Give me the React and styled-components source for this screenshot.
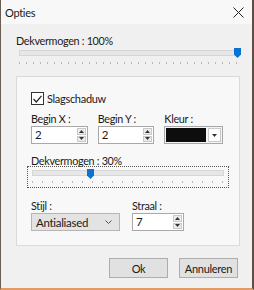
import React from 'react';
import styled, { createGlobalStyle } from 'styled-components';

const GlobalStyle = createGlobalStyle`
  html, body {
    margin: 0;
    padding: 0;
    background: #f0f0f0;
  }
  body {
    font-family: Lato, "Open Sans", sans-serif;
    font-size: 10.5px;
    letter-spacing: -0.3px;
    color: #1a1a1a;
  }
`;

const Window = styled.div`
  width: 254px;
  height: 290px;
  box-sizing: border-box;
  display: flex;
  flex-direction: column;
  background: #f0f0f0;
  border-left: 1px solid #6a5d52;
  border-right: 2px solid #5a5048;
  border-bottom: 2px solid #e39a63;
  overflow: hidden;
`;

const TitleBar = styled.div`
  height: 24px;
  display: flex;
  align-items: center;
  justify-content: space-between;
  padding: 0 6px 0 4px;
  background: #f8f8f8;
  font-size: 11px;
`;

const CloseButton = styled.span`
  display: flex;
  align-items: center;
  justify-content: center;
  width: 16px;
  height: 16px;
`;

const Body = styled.div`
  flex: 1;
  display: flex;
  flex-direction: column;
  padding: 10px 12px 0 15px;
`;

const Label = styled.div`
  font-size: 10.8px;
  line-height: 13px;
  margin-top: ${({ $top = 0 }) => $top}px;
  white-space: nowrap;
`;

const SliderBox = styled.div`
  position: relative;
  height: ${({ $height }) => $height}px;
  margin: ${({ $margin }) => $margin};
  box-sizing: border-box;
  border: 1px ${({ $focused }) => ($focused ? 'dotted #555' : 'solid transparent')};
  padding: 0 ${({ $pad }) => $pad}px;
`;

const Track = styled.div`
  margin-top: ${({ $top }) => $top}px;
  height: 4px;
  background: #e7e7e7;
  border: 1px solid #d6d6d6;
`;

const Ticks = styled.div`
  margin-top: ${({ $gap }) => $gap}px;
  height: 2px;
  background: repeating-linear-gradient(
    to right,
    #b8b8b8 0 1px,
    transparent 1px ${({ $step }) => $step}px
  );
`;

const Thumb = styled.svg`
  position: absolute;
  top: ${({ $top }) => $top}px;
`;

const Slider = ({ value, height, margin, focused, pad, trackTop, tickGap, step, thumbTop }) => (
  <SliderBox $height={height} $margin={margin} $focused={focused} $pad={pad}>
    <Track $top={trackTop} />
    <Ticks $gap={tickGap} $step={step} />
    <Thumb
      width="7"
      height="10"
      viewBox="0 0 7 10"
      $top={thumbTop}
      style={{ left: `calc(${pad}px + (100% - ${pad * 2}px) * ${value / 100} - 3px)` }}
    >
      <path d="M0 0 H7 V6.5 L3.5 10 L0 6.5 Z" fill="#0a72d1" />
    </Thumb>
  </SliderBox>
);

const Group = styled.div`
  height: 170px;
  box-sizing: border-box;
  border: 1px solid #dadada;
  background: #f8f8f8;
  padding: 15px 16px 0 14px;
  display: flex;
  flex-direction: column;
`;

const CheckRow = styled.label`
  display: flex;
  align-items: center;
  gap: 3px;
  height: 13px;
  font-size: 11px;
`;

const CheckBox = styled.span`
  width: 11px;
  height: 11px;
  border: 1px solid #333;
  background: #fff;
  display: flex;
  align-items: center;
  justify-content: center;
`;

const FieldRow = styled.div`
  display: flex;
  gap: ${({ $gap }) => $gap}px;
  margin-top: ${({ $top }) => $top}px;
`;

const Field = styled.div`
  display: flex;
  flex-direction: column;
  gap: 1px;
  width: ${({ $w }) => $w}px;
`;

const InputBox = styled.div`
  height: 18px;
  box-sizing: border-box;
  display: flex;
  align-items: stretch;
  background: #fff;
  border: 1px solid #a8a8a8;
`;

const InputText = styled.span`
  flex: 1;
  padding-left: 3px;
  font-size: 11.5px;
  line-height: 16px;
`;

const SpinCol = styled.div`
  width: 9px;
  display: flex;
  flex-direction: column;
  justify-content: center;
  gap: 1px;
  margin: 1px 1px 1px 0;
`;

const SpinBtn = styled.span`
  flex: 1;
  display: flex;
  align-items: center;
  justify-content: center;
  background: #ececec;
  border: 1px solid #c9c9c9;
`;

const Tri = ({ down }) => (
  <svg width="5" height="3" viewBox="0 0 5 3">
    <path d={down ? 'M0 0 H5 L2.5 3 Z' : 'M0 3 H5 L2.5 0 Z'} fill="#333" />
  </svg>
);

const Spinner = ({ value }) => (
  <InputBox>
    <InputText>{value}</InputText>
    <SpinCol>
      <SpinBtn><Tri /></SpinBtn>
      <SpinBtn><Tri down /></SpinBtn>
    </SpinCol>
  </InputBox>
);

const ColorPick = styled.div`
  height: 18px;
  box-sizing: border-box;
  display: flex;
  padding: 1px;
  gap: 2px;
  background: #f4f4f4;
  border: 1px solid #a8a8a8;
`;

const Swatch = styled.span`
  flex: 1;
  background: #0d0d0d;
`;

const ArrowBox = styled.span`
  width: 11px;
  display: flex;
  align-items: center;
  justify-content: center;
  background: #fff;
  border: 1px solid #c9c9c9;
`;

const Select = styled.div`
  height: 18px;
  box-sizing: border-box;
  display: flex;
  align-items: center;
  justify-content: space-between;
  padding: 0 7px 0 4px;
  background: #e3e3e3;
  border: 1px solid #b5b5b5;
  font-size: 11.5px;
`;

const Buttons = styled.div`
  display: flex;
  justify-content: flex-end;
  gap: 11px;
  margin-top: 12px;
  padding-right: 2px;
`;

const Button = styled.button`
  width: 59px;
  height: 20px;
  padding: 0;
  font-family: inherit;
  font-size: 11px;
  letter-spacing: inherit;
  color: #1a1a1a;
  background: #e1e1e1;
  border: 1px solid #adadad;
`;

export default function App() {
  return (
    <>
      <GlobalStyle />
      <Window>
        <TitleBar>
          <span>Opties</span>
          <CloseButton>
            <svg width="11" height="11" viewBox="0 0 11 11">
              <path d="M0.5 0.5 L10.5 10.5 M10.5 0.5 L0.5 10.5" stroke="#222" strokeWidth="1" />
            </svg>
          </CloseButton>
        </TitleBar>
        <Body>
          <Label>Dekvermogen : 100%</Label>
          <Slider
            value={100}
            height={29}
            margin="0"
            pad={2}
            trackTop={2}
            tickGap={6}
            step={7}
            thumbTop={0}
          />
          <Group>
            <CheckRow>
              <CheckBox>
                <svg width="9" height="8" viewBox="0 0 9 8">
                  <path d="M0.5 4 L3.3 7 L8.5 0.8" stroke="#222" strokeWidth="1.2" fill="none" />
                </svg>
              </CheckBox>
              Slagschaduw
            </CheckRow>
            <FieldRow $gap={10} $top={7}>
              <Field $w={57}>
                <Label>Begin X :</Label>
                <Spinner value="2" />
              </Field>
              <Field $w={57}>
                <Label>Begin Y :</Label>
                <Spinner value="2" />
              </Field>
              <Field $w={59}>
                <Label>Kleur :</Label>
                <ColorPick>
                  <Swatch />
                  <ArrowBox><Tri down /></ArrowBox>
                </ColorPick>
              </Field>
            </FieldRow>
            <Label $top={10}>Dekvermogen : 30%</Label>
            <Slider
              value={30}
              height={22}
              margin="-1px -6px 0 -4px"
              focused
              pad={4}
              trackTop={3}
              tickGap={5}
              step={10}
              thumbTop={2}
            />
            <FieldRow $gap={12} $top={11}>
              <Field $w={89}>
                <Label>Stijl :</Label>
                <Select>
                  Antialiased
                  <svg width="7" height="4" viewBox="0 0 7 4">
                    <path d="M0.5 0.5 L3.5 3.5 L6.5 0.5" stroke="#555" fill="none" />
                  </svg>
                </Select>
              </Field>
              <Field $w={52}>
                <Label>Straal :</Label>
                <Spinner value="7" />
              </Field>
            </FieldRow>
          </Group>
          <Buttons>
            <Button>Ok</Button>
            <Button>Annuleren</Button>
          </Buttons>
        </Body>
      </Window>
    </>
  );
}
